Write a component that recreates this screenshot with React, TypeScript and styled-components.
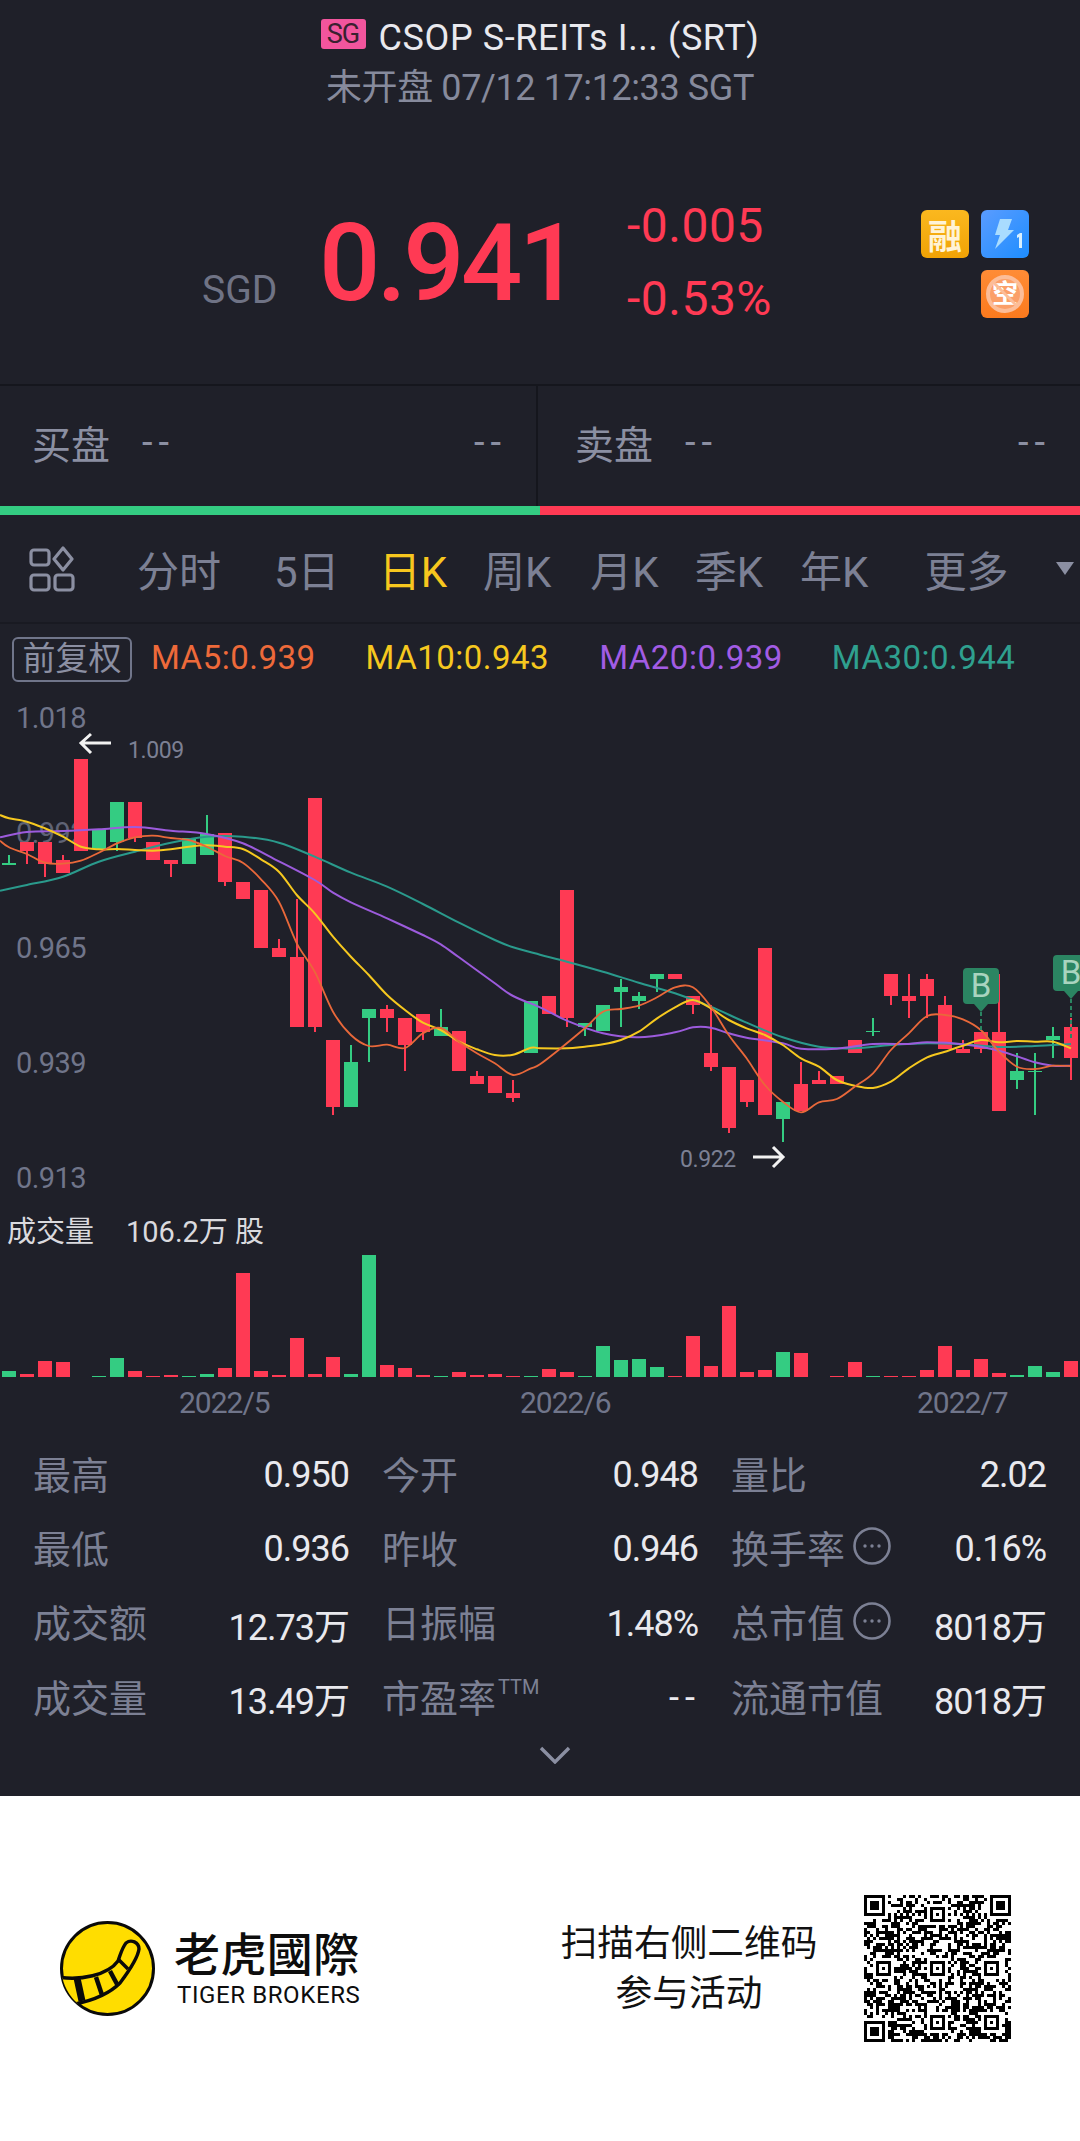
import React from "react";
import styled, { createGlobalStyle } from "styled-components";

const BG = "#1f2029";
const RED = "#ff3a54";
const GREEN = "#34cc82";
const GREY = "#7c8094";
const FONT = `Roboto, "Noto Sans CJK SC", sans-serif`;

const GlobalStyle = createGlobalStyle`
    html, body {
        margin: 0;
        padding: 0;
        background: #fff;
        font-family: ${FONT};
    }
    * {
        box-sizing: border-box;
    }
`;

const Page = styled.div`
    width: 1080px;
    height: 2141px;
    overflow: hidden;
    display: flex;
    flex-direction: column;
`;

const Dark = styled.div`
    height: 1796px;
    flex: none;
    background: ${BG};
    display: flex;
    flex-direction: column;
`;

const Header = styled.header`
    height: 200px;
    padding-top: 16px;
    display: flex;
    flex-direction: column;
    align-items: center;
`;

const TitleLine = styled.div`
    height: 44px;
    display: flex;
    align-items: center;
    gap: 13px;
    color: #e9e9ee;
    font-size: 36px;
    letter-spacing: 0.6px;
    white-space: nowrap;
`;

const MarketTag = styled.span`
    width: 45px;
    height: 30px;
    margin-top: -8px;
    border-radius: 3px;
    background: #f2559d;
    color: #3a2030;
    font-size: 27px;
    line-height: 30px;
    text-align: center;
    letter-spacing: -1px;
`;

const SubLine = styled.div`
    height: 44px;
    margin-top: 6px;
    color: #868a9c;
    font-size: 36px;
    line-height: 44px;
    letter-spacing: -0.4px;
    white-space: nowrap;
`;

const Summary = styled.section`
    height: 184px;
    padding-left: 202px;
    padding-right: 51px;
    display: flex;
    align-items: flex-start;
`;

const Currency = styled.span`
    margin-top: 68px;
    width: 74px;
    color: #6f7385;
    font-size: 39px;
    line-height: 44px;
`;

const BigPrice = styled.span`
    margin-left: 43px;
    margin-top: 8px;
    width: 246px;
    color: ${RED};
    font-size: 108px;
    font-weight: 500;
    line-height: 110px;
    letter-spacing: -3.6px;
    white-space: nowrap;
`;

const Change = styled.div`
    margin-left: 62px;
    margin-top: -2px;
    display: flex;
    flex-direction: column;
    gap: 17px;
    color: ${RED};
    font-size: 48px;
    line-height: 56px;
    letter-spacing: 0.5px;
`;

const TagGrid = styled.div`
    margin-left: auto;
    margin-top: 10px;
    display: grid;
    grid-template-columns: 48px 48px;
    grid-auto-rows: 48px;
    gap: 12px 12px;
`;

const Tag = styled.div<{ $bg: string; $col?: number }>`
    grid-column: ${(p) => p.$col ?? "auto"};
    border-radius: 6px;
    background: ${(p) => p.$bg};
    color: #fff3d6;
    font-size: 34px;
    font-weight: 700;
    display: flex;
    align-items: center;
    justify-content: center;
`;

const QuoteRow = styled.section`
    height: 122px;
    border-top: 2px solid #15161d;
    display: flex;
`;

const QuoteSide = styled.div<{ $first?: boolean }>`
    flex: ${(p) => (p.$first ? "none" : "1")};
    width: ${(p) => (p.$first ? "538px" : "auto")};
    padding: 0 29px 8px ${(p) => (p.$first ? "32px" : "37px")};
    display: flex;
    align-items: center;
    color: #8b8fa2;
    font-size: 39px;
    border-right: ${(p) => (p.$first ? "2px solid #15161d" : "none")};
`;

const QuoteDash = styled.span<{ $right?: boolean }>`
    font-size: 38px;
    letter-spacing: 6px;
    margin-left: ${(p) => (p.$right ? "auto" : "32px")};
`;

const Depth = styled.div`
    height: 9px;
    display: flex;
`;

const DepthPart = styled.div<{ $color: string }>`
    flex: 1;
    background: ${(p) => p.$color};
`;

const Tabs = styled.nav`
    height: 109px;
    border-bottom: 2px solid #191a22;
    display: flex;
    align-items: center;
    padding-left: 29px;
`;

const Tab = styled.span<{ $left: number; $active?: boolean }>`
    margin-left: ${(p) => p.$left}px;
    font-size: 42px;
    color: ${(p) => (p.$active ? "#f7c71e" : "#7c8094")};
    white-space: nowrap;
`;

const Caret = styled.span`
    margin-left: 48px;
    width: 0;
    height: 0;
    border-left: 9px solid transparent;
    border-right: 9px solid transparent;
    border-top: 13px solid #8b8fa2;
`;

const MaRow = styled.div`
    height: 76px;
    padding: 13px 0 0 12px;
    display: flex;
    align-items: flex-start;
`;

const AdjustBox = styled.span`
    width: 120px;
    height: 45px;
    border: 2px solid #70758a;
    border-radius: 6px;
    color: #8b8fa2;
    font-size: 33px;
    line-height: 40px;
    text-align: center;
    white-space: nowrap;
`;

const MaText = styled.span<{ $color: string; $left: number }>`
    margin-left: ${(p) => p.$left}px;
    margin-top: 2px;
    color: ${(p) => p.$color};
    font-size: 33px;
    line-height: 38px;
    white-space: nowrap;
    letter-spacing: 0.5px;
`;

const ChartSvg = styled.svg`
    display: block;
    flex: none;
    font-family: ${FONT};
`;

const VolumeHead = styled.div`
    height: 55px;
    padding: 14px 0 0 7px;
    display: flex;
    gap: 32px;
    color: #dadade;
    font-size: 29px;
    line-height: 36px;
`;

const DateAxis = styled.div`
    height: 43px;
    padding: 9px 0 0 179px;
    display: flex;
    color: #70758a;
    font-size: 30px;
    line-height: 34px;
    letter-spacing: -1px;
`;

const DateLabel = styled.span<{ $left: number }>`
    width: 88px;
    margin-left: ${(p) => p.$left}px;
    white-space: nowrap;
`;

const Stats = styled.section`
    padding: 18px 34px 0 33px;
    display: grid;
    grid-template-columns: 316px 316px 315px;
    column-gap: 33px;
    grid-auto-rows: 74.3px;
`;

const Stat = styled.div`
    display: flex;
    align-items: center;
    justify-content: space-between;
`;

const StatLabel = styled.span`
    display: flex;
    align-items: center;
    margin-bottom: 6px;
    color: ${GREY};
    font-size: 38px;
    white-space: nowrap;
`;

const StatValue = styled.span<{ $dash?: boolean }>`
    color: #e9e9ee;
    font-size: 36px;
    letter-spacing: ${(p) => (p.$dash ? "6px" : "-1px")};
    margin-right: ${(p) => (p.$dash ? "-3px" : "0")};
    white-space: nowrap;
`;

const Sup = styled.sup`
    font-size: 20px;
    line-height: 0;
    margin-left: 2px;
    position: relative;
    top: -8px;
    vertical-align: baseline;
`;

const DotsIcon = styled.svg`
    margin-left: 8px;
    flex: none;
`;

const Expand = styled.div`
    margin-top: 11px;
    padding-left: 30px;
    display: flex;
    justify-content: center;
`;

const Footer = styled.footer`
    height: 345px;
    flex: none;
    background: #fff;
    padding: 99px 0 0 60px;
    display: flex;
    align-items: flex-start;
`;

const LogoGroup = styled.div`
    margin-top: 26px;
    display: flex;
    flex: none;
`;

const LogoMark = styled.svg`
    flex: none;
`;

const Brand = styled.div`
    width: 186px;
    flex: none;
    margin-top: 7px;
    margin-left: 19px;
    color: #0d0d0d;
    display: flex;
    flex-direction: column;
    white-space: nowrap;
`;

const BrandCn = styled.div`
    font-size: 46px;
    line-height: 54px;
    letter-spacing: 0.4px;
    font-weight: 500;
`;

const BrandEn = styled.div`
    font-size: 24px;
    line-height: 26px;
    letter-spacing: 0.6px;
    margin-left: 3px;
`;

const Promo = styled.div`
    width: 258px;
    flex: none;
    margin-left: 200px;
    margin-top: 24px;
    color: #111;
    font-size: 36.7px;
    line-height: 50px;
    text-align: center;
    white-space: nowrap;
`;

const QrBox = styled.div`
    margin-left: 46px;
    flex: none;
`;

// chart values were read off a crop: x at 2.904 per px, y at 3 per px
const sx = (v: number) => v / 2.904;
const sy = (v: number) => v / 3;

type Candle = [string, number, number, number?, number?];

const candles: Candle[] = [
    ["g", 490, 494, 466, 494], ["r", 427, 453, 427, 492], ["r", 427, 492, 427, 530], ["r", 480, 519, 466, 519],
    ["r", 176, 452], ["g", 388, 447], ["g", 307, 427, 307, 452], ["r", 307, 414, 307, 425],
    ["r", 427, 479], ["r", 479, 492, 479, 532], ["g", 415, 492], ["g", 401, 465, 346, 465],
    ["r", 400, 545, 400, 558], ["r", 545, 598], ["r", 571, 744], ["r", 744, 770, 717, 770],
    ["r", 770, 981, 598, 981], ["r", 294, 981, 294, 995], ["r", 1020, 1220, 1020, 1246], ["g", 1087, 1220, 1034, 1220],
    ["g", 928, 954, 928, 1087], ["r", 928, 954, 915, 995], ["r", 954, 1034, 954, 1113], ["r", 942, 995, 942, 1020],
    ["g", 981, 1007, 928, 1007], ["r", 994, 1113], ["r", 1127, 1153, 1113, 1153], ["r", 1127, 1180],
    ["r", 1180, 1193, 1140, 1206], ["g", 902, 1060], ["r", 889, 941], ["r", 571, 954, 571, 980],
    ["g", 968, 981, 968, 1007], ["g", 915, 994], ["g", 862, 876, 836, 981], ["g", 889, 902, 876, 928],
    ["g", 823, 836, 823, 876], ["r", 823, 836], ["r", 889, 915, 889, 941], ["r", 1060, 1100, 915, 1113],
    ["r", 1100, 1285, 1100, 1298], ["r", 1140, 1205, 1140, 1220], ["r", 744, 1245], ["g", 1206, 1258, 1206, 1325],
    ["r", 1153, 1232, 1087, 1232], ["r", 1140, 1153, 1113, 1153], ["r", 1127, 1153], ["r", 1020, 1060],
    ["g", 992, 996, 955, 1007], ["r", 823, 888, 823, 915], ["r", 889, 902, 823, 954], ["r", 836, 888, 823, 954],
    ["r", 915, 1047, 889, 1047], ["r", 1047, 1060, 1020, 1060], ["r", 995, 1047, 995, 1060], ["r", 995, 1232, 823, 1232],
    ["g", 1113, 1140, 1060, 1166], ["g", 1112, 1116, 1060, 1246], ["g", 1007, 1020, 981, 1073], ["r", 981, 1073, 955, 1140],
];

const volumes: [string, number][] = [
    ["g", 513], ["r", 522], ["r", 483], ["r", 486], ["r", 531], ["g", 529], ["g", 474], ["r", 513], ["r", 529], ["r", 526],
    ["g", 528], ["g", 522], ["r", 505], ["r", 218], ["r", 513], ["r", 525], ["r", 415], ["r", 523], ["r", 470], ["g", 522],
    ["g", 165], ["r", 494], ["r", 505], ["r", 526], ["g", 529], ["r", 516], ["r", 524], ["r", 522], ["r", 529], ["g", 529],
    ["r", 508], ["r", 517], ["g", 528], ["g", 438], ["g", 481], ["g", 478], ["g", 501], ["r", 527], ["r", 407], ["r", 498],
    ["r", 318], ["r", 515], ["r", 509], ["g", 455], ["r", 460], ["r", 531], ["r", 529], ["r", 487], ["g", 527], ["r", 529],
    ["r", 527], ["r", 510], ["r", 439], ["r", 511], ["r", 477], ["r", 520], ["g", 525], ["g", 499], ["g", 517], ["r", 484],
];

// x in crop units; right half points get 540px added
const joinHalves = (left: number[][], right: number[][]) => [
    ...left.map(([x, y]) => [sx(x), sy(y)]),
    ...right.map(([x, y]) => [540 + sx(x), sy(y)]),
];

const ma5 = joinHalves(
    [[0, 422], [26, 442], [78, 462], [130, 488], [183, 491], [235, 482], [287, 458], [340, 430], [392, 412], [444, 407], [496, 414], [548, 420], [600, 440], [653, 468], [705, 488], [758, 538], [810, 605], [862, 730], [914, 815], [967, 935], [1019, 1005], [1071, 1038], [1124, 1034], [1176, 1044], [1228, 1000], [1280, 984], [1333, 1025], [1385, 1060], [1437, 1090], [1490, 1125], [1542, 1105]],
    [[0, 1093], [60, 1045], [130, 985], [183, 935], [235, 927], [287, 917], [340, 892], [392, 862], [444, 862], [496, 920], [548, 1005], [600, 1075], [653, 1155], [705, 1205], [758, 1237], [810, 1207], [862, 1197], [914, 1160], [967, 1120], [1019, 1050], [1071, 1000], [1124, 948], [1176, 945], [1228, 958], [1280, 990], [1333, 1055], [1385, 1100], [1437, 1107], [1490, 1097], [1542, 1098]]
);

const ma10 = joinHalves(
    [[0, 345], [26, 355], [78, 365], [130, 385], [183, 410], [235, 440], [287, 448], [340, 447], [392, 450], [444, 452], [496, 448], [548, 440], [600, 436], [653, 440], [705, 447], [758, 478], [810, 515], [862, 585], [914, 640], [967, 710], [1019, 770], [1071, 825], [1124, 885], [1176, 930], [1228, 968], [1280, 990], [1333, 1025], [1385, 1048], [1437, 1065], [1490, 1064], [1542, 1043]],
    [[0, 1045], [78, 1045], [130, 1040], [183, 1033], [235, 1020], [287, 995], [340, 955], [392, 922], [444, 900], [496, 925], [548, 960], [600, 985], [653, 1005], [705, 1035], [758, 1075], [810, 1100], [862, 1140], [914, 1157], [967, 1164], [1019, 1145], [1071, 1105], [1124, 1072], [1176, 1055], [1228, 1037], [1280, 1020], [1333, 1027], [1385, 1023], [1437, 1025], [1490, 1025], [1542, 1045]]
);

const ma20 = joinHalves(
    [[0, 412], [78, 396], [183, 393], [287, 388], [392, 381], [496, 392], [600, 402], [705, 430], [810, 484], [914, 540], [967, 578], [1019, 607], [1124, 655], [1228, 705], [1280, 733], [1333, 772], [1437, 850], [1490, 888]],
    [[0, 922], [78, 962], [183, 1000], [287, 1012], [392, 997], [444, 982], [496, 983], [548, 1000], [600, 1013], [705, 1030], [758, 1046], [862, 1046], [967, 1032], [1071, 1032], [1124, 1027], [1228, 1033], [1333, 1052], [1437, 1087], [1490, 1097], [1542, 1097]]
);

const ma30 = joinHalves(
    [[0, 572], [78, 555], [183, 530], [287, 485], [392, 455], [496, 428], [600, 410], [705, 410], [810, 428], [914, 470], [1019, 518], [1124, 560], [1228, 612], [1333, 668], [1437, 720], [1490, 742]],
    [[0, 764], [78, 785], [183, 815], [287, 848], [392, 880], [496, 920], [600, 968], [705, 1012], [810, 1040], [914, 1045], [1019, 1035], [1124, 1030], [1228, 1033], [1333, 1041], [1437, 1038], [1542, 1032]]
);

// catmull-rom through the points
function smooth(pts: number[][]) {
    let d = `M${pts[0][0].toFixed(1)} ${pts[0][1].toFixed(1)}`;
    for (let i = 0; i < pts.length - 1; i++) {
        const p0 = pts[Math.max(i - 1, 0)];
        const p1 = pts[i];
        const p2 = pts[i + 1];
        const p3 = pts[Math.min(i + 2, pts.length - 1)];
        const c1x = p1[0] + (p2[0] - p0[0]) / 6;
        const c1y = p1[1] + (p2[1] - p0[1]) / 6;
        const c2x = p2[0] - (p3[0] - p1[0]) / 6;
        const c2y = p2[1] - (p3[1] - p1[1]) / 6;
        d += `C${c1x.toFixed(1)} ${c1y.toFixed(1)} ${c2x.toFixed(1)} ${c2y.toFixed(1)} ${p2[0].toFixed(1)} ${p2[1].toFixed(1)}`;
    }
    return d;
}

const colorOf = (k: string) => (k === "g" ? GREEN : RED);
const candleX = (i: number) => 9 + 18 * i;

function SignalPin({ x, top, bottom }: { x: number; top: number; bottom: number }) {
    return (
        <g>
            <line x1={x} x2={x} y1={top + 44} y2={bottom} stroke="#2b8562" strokeWidth="2" strokeDasharray="4 3" />
            <path
                d={`M${x - 14} ${top}h28a4 4 0 0 1 4 4v28a4 4 0 0 1-4 4h-7l-7 8l-7-8h-7a4 4 0 0 1-4-4v-28a4 4 0 0 1 4-4z`}
                fill="#2b8562"
            />
            <text x={x} y={top + 29} textAnchor="middle" fontSize="33" fill="#a9d4bf">B</text>
        </g>
    );
}

function PriceChart() {
    const axis = { fontSize: 29, fill: "#70758a", letterSpacing: -0.6 };
    return (
        <ChartSvg width="1080" height="500" viewBox="0 0 1080 500">
            <text x="16" y="28" {...axis}>1.018</text>
            <text x="16" y="143" {...axis} fill="#5f6375">0.992</text>
            <text x="16" y="258" {...axis}>0.965</text>
            <text x="16" y="373" {...axis}>0.939</text>
            <text x="16" y="488" {...axis}>0.913</text>
            {candles.map(([k, top, bottom, wickTop, wickBottom], i) => {
                const x = candleX(i);
                return (
                    <g key={i} fill={colorOf(k)} shapeRendering="crispEdges">
                        {wickTop !== undefined && (
                            <rect x={x - 1} y={sy(wickTop)} width="2" height={sy((wickBottom as number) - wickTop)} />
                        )}
                        <rect x={x - 7} y={sy(top)} width="14.4" height={sy(bottom - top)} />
                    </g>
                );
            })}
            <path d={smooth(ma30)} fill="none" stroke="#2a9a8c" strokeWidth="2" />
            <path d={smooth(ma20)} fill="none" stroke="#9c5bdc" strokeWidth="2" />
            <path d={smooth(ma10)} fill="none" stroke="#f6c81f" strokeWidth="2" />
            <path d={smooth(ma5)} fill="none" stroke="#e9683a" strokeWidth="1.8" />
            <path d="M111 43H81M91 34l-10 9l10 10" fill="none" stroke="#f2f2f2" strokeWidth="3" />
            <text x="128" y="58" fontSize="23" fill="#7c8094" letterSpacing="-0.4">1.009</text>
            <text x="680" y="467" fontSize="23" fill="#7c8094" letterSpacing="-0.4">0.922</text>
            <path d="M753 457H783M773 447l10 10l-10 10" fill="none" stroke="#f2f2f2" strokeWidth="3" />
            <SignalPin x={981} top={268} bottom={330} />
            <SignalPin x={1071} top={255} bottom={340} />
        </ChartSvg>
    );
}

function VolumeChart() {
    return (
        <ChartSvg width="1080" height="122" viewBox="0 0 1080 122">
            {volumes.map(([k, top], i) => (
                <rect
                    key={i}
                    x={candleX(i) - 7}
                    y={sy(top) - 55}
                    width="14.4"
                    height={sy(531 - top)}
                    fill={colorOf(k)}
                    shapeRendering="crispEdges"
                />
            ))}
        </ChartSvg>
    );
}

function GridIcon() {
    return (
        <svg width="46" height="46" viewBox="0 0 46 46" fill="none" stroke="#8b8fa2" strokeWidth="3.2">
            <rect x="2" y="4" width="18" height="15" rx="3" />
            <path d="M34 2l9 11l-9 11l-9-11z" strokeLinejoin="round" />
            <rect x="2" y="29" width="18" height="15" rx="3" />
            <rect x="26" y="29" width="18" height="15" rx="3" />
        </svg>
    );
}

function MoreDots() {
    return (
        <DotsIcon width="38" height="38" viewBox="0 0 38 38">
            <circle cx="19" cy="19" r="17.5" fill="none" stroke="#7c8094" strokeWidth="2.6" />
            <circle cx="12" cy="19" r="1.7" fill="#7c8094" />
            <circle cx="19" cy="19" r="1.7" fill="#7c8094" />
            <circle cx="26" cy="19" r="1.7" fill="#7c8094" />
        </DotsIcon>
    );
}

function BoltTag() {
    return (
        <svg width="48" height="48" viewBox="0 0 48 48">
            <path d="M19 9h12l-4 11h6L14 39l5-14h-5z" fill="#a9dcff" />
            <path d="M36 25l3-2h2v15h-3V27l-2 1z" fill="#d8f0ff" />
        </svg>
    );
}

function NoShortTag() {
    return (
        <svg width="48" height="48" viewBox="0 0 48 48">
            <circle cx="24" cy="24" r="17" fill="#fb9f68" stroke="#fcbd98" strokeWidth="4" />
            <text x="24" y="33" textAnchor="middle" fontSize="26" fontWeight="700" fill="#fff">空</text>
            <line x1="12" y1="12" x2="36" y2="36" stroke="#fcbd98" strokeWidth="3" />
        </svg>
    );
}

function TigerLogo() {
    return (
        <LogoMark width="95" height="95" viewBox="0 0 95 95">
            <defs>
                <clipPath id="tigerClip">
                    <circle cx="47.5" cy="47.5" r="46" />
                </clipPath>
            </defs>
            <circle cx="47.5" cy="47.5" r="46" fill="#ffdd00" stroke="#0a0a0a" strokeWidth="3" />
            <g clipPath="url(#tigerClip)" stroke="#0a0a0a">
                <path
                    d="M-2 56C20 60 48 54 58 40C61 32 62 27 66 22C71 18 79 21 79 28C78 36 72 46 60 62C48 74 30 80 15 83"
                    fill="#ffdd00"
                    strokeWidth="3.4"
                />
                <path d="M17 57L22 80" strokeWidth="7" />
                <path d="M36 56L42 74" strokeWidth="4.5" />
                <path d="M50 50L58 65" strokeWidth="4.5" />
                <path d="M58 38L68 48" strokeWidth="3.5" />
            </g>
        </LogoMark>
    );
}

// the code in the picture can't be read module by module, so the data part is filled from a seed
const QR_SIZE = 49;

function buildQr() {
    const cells: boolean[][] = [];
    let seed = 20220712;
    for (let r = 0; r < QR_SIZE; r++) {
        cells.push([]);
        for (let c = 0; c < QR_SIZE; c++) {
            seed = (seed * 1664525 + 1013904223) >>> 0;
            cells[r].push(seed >>> 24 > 120);
        }
    }
    const square = (top: number, left: number, size: number, inner: number) => {
        for (let r = -1; r <= size; r++) {
            for (let c = -1; c <= size; c++) {
                const y = top + r;
                const x = left + c;
                if (y < 0 || x < 0 || y >= QR_SIZE || x >= QR_SIZE) continue;
                const edge = r === 0 || c === 0 || r === size - 1 || c === size - 1;
                const inside = r < 0 || c < 0 || r >= size || c >= size;
                const m = Math.floor((size - inner) / 2);
                const core = r >= m && c >= m && r < m + inner && c < m + inner;
                cells[y][x] = !inside && (edge || core);
            }
        }
    };
    for (let i = 8; i < QR_SIZE - 8; i++) {
        cells[6][i] = i % 2 === 0;
        cells[i][6] = i % 2 === 0;
    }
    [[22, 22], [22, 40], [40, 22], [40, 40], [4, 22], [22, 4]].forEach(([t, l]) => square(t, l, 5, 1));
    square(0, 0, 7, 3);
    square(0, QR_SIZE - 7, 7, 3);
    square(QR_SIZE - 7, 0, 7, 3);
    return cells;
}

const qrCells = buildQr();

function QrCode() {
    return (
        <svg width="147" height="147" viewBox="0 0 49 49" shapeRendering="crispEdges">
            {qrCells.map((row, r) =>
                row.map((on, c) => (on ? <rect key={`${r}-${c}`} x={c} y={r} width="1" height="1" fill="#000" /> : null))
            )}
        </svg>
    );
}

const tabs = [
    { label: "分时", left: 62 },
    { label: "5日", left: 53 },
    { label: "日K", left: 39, active: true },
    { label: "周K", left: 36 },
    { label: "月K", left: 39 },
    { label: "季K", left: 36 },
    { label: "年K", left: 37 },
    { label: "更多", left: 56 },
];

const maItems = [
    { text: "MA5:0.939", color: "#ee6a3a", left: 19 },
    { text: "MA10:0.943", color: "#f6c81f", left: 50 },
    { text: "MA20:0.939", color: "#a25ce4", left: 50 },
    { text: "MA30:0.944", color: "#2fa08f", left: 49 },
];

const stats: { label: React.ReactNode; value: string }[] = [
    { label: "最高", value: "0.950" },
    { label: "今开", value: "0.948" },
    { label: "量比", value: "2.02" },
    { label: "最低", value: "0.936" },
    { label: "昨收", value: "0.946" },
    { label: <>换手率<MoreDots /></>, value: "0.16%" },
    { label: "成交额", value: "12.73万" },
    { label: "日振幅", value: "1.48%" },
    { label: <>总市值<MoreDots /></>, value: "8018万" },
    { label: "成交量", value: "13.49万" },
    { label: <>市盈率<Sup>TTM</Sup></>, value: "--" },
    { label: "流通市值", value: "8018万" },
];

function App() {
    return (
        <Page>
            <GlobalStyle />
            <Dark>
                <Header>
                    <TitleLine>
                        <MarketTag>SG</MarketTag>
                        <span>CSOP S-REITs I... (SRT)</span>
                    </TitleLine>
                    <SubLine>未开盘 07/12 17:12:33 SGT</SubLine>
                </Header>
                <Summary>
                    <Currency>SGD</Currency>
                    <BigPrice>0.941</BigPrice>
                    <Change>
                        <span>-0.005</span>
                        <span>-0.53%</span>
                    </Change>
                    <TagGrid>
                        <Tag $bg="linear-gradient(180deg,#fbb81f,#f0a205)">融</Tag>
                        <Tag $bg="linear-gradient(135deg,#5a9cff,#1d8dff)"><BoltTag /></Tag>
                        <Tag $col={2} $bg="linear-gradient(180deg,#ff8c36,#fb7a1e)"><NoShortTag /></Tag>
                    </TagGrid>
                </Summary>
                <QuoteRow>
                    <QuoteSide $first>
                        买盘<QuoteDash>--</QuoteDash><QuoteDash $right>--</QuoteDash>
                    </QuoteSide>
                    <QuoteSide>
                        卖盘<QuoteDash>--</QuoteDash><QuoteDash $right>--</QuoteDash>
                    </QuoteSide>
                </QuoteRow>
                <Depth>
                    <DepthPart $color={GREEN} />
                    <DepthPart $color={RED} />
                </Depth>
                <Tabs>
                    <GridIcon />
                    {tabs.map((t) => (
                        <Tab key={t.label} $left={t.left} $active={t.active}>{t.label}</Tab>
                    ))}
                    <Caret />
                </Tabs>
                <MaRow>
                    <AdjustBox>前复权</AdjustBox>
                    {maItems.map((m) => (
                        <MaText key={m.text} $color={m.color} $left={m.left}>{m.text}</MaText>
                    ))}
                </MaRow>
                <PriceChart />
                <VolumeHead>
                    <span>成交量</span>
                    <span>106.2万 股</span>
                </VolumeHead>
                <VolumeChart />
                <DateAxis>
                    <DateLabel $left={0}>2022/5</DateLabel>
                    <DateLabel $left={253}>2022/6</DateLabel>
                    <DateLabel $left={309}>2022/7</DateLabel>
                </DateAxis>
                <Stats>
                    {stats.map((s, i) => (
                        <Stat key={i}>
                            <StatLabel>{s.label}</StatLabel>
                            <StatValue $dash={s.value === "--"}>{s.value}</StatValue>
                        </Stat>
                    ))}
                </Stats>
                <Expand>
                    <svg width="32" height="18" viewBox="0 0 32 18" fill="none" stroke="#8b8fa2" strokeWidth="3.4">
                        <path d="M2 2l14 14l14-14" />
                    </svg>
                </Expand>
            </Dark>
            <Footer>
                <LogoGroup>
                    <TigerLogo />
                    <Brand>
                        <BrandCn>老虎國際</BrandCn>
                        <BrandEn>TIGER BROKERS</BrandEn>
                    </Brand>
                </LogoGroup>
                <Promo>
                    扫描右侧二维码
                    <br />
                    参与活动
                </Promo>
                <QrBox>
                    <QrCode />
                </QrBox>
            </Footer>
        </Page>
    );
}

export default App;
